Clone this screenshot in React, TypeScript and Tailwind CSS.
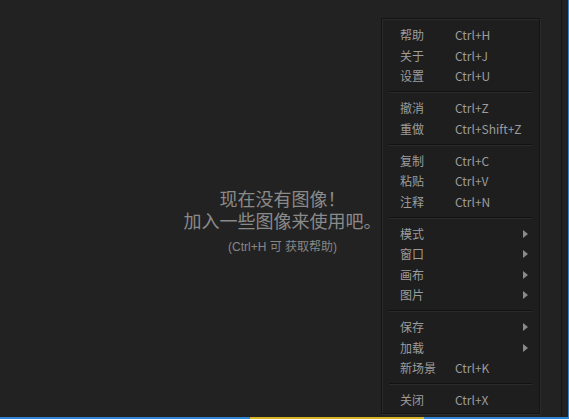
import React from 'react'

type Item = { label: string; shortcut?: string; sub?: boolean }

const groups: Item[][] = [
  [
    { label: '帮助', shortcut: 'Ctrl+H' },
    { label: '关于', shortcut: 'Ctrl+J' },
    { label: '设置', shortcut: 'Ctrl+U' },
  ],
  [
    { label: '撤消', shortcut: 'Ctrl+Z' },
    { label: '重做', shortcut: 'Ctrl+Shift+Z' },
  ],
  [
    { label: '复制', shortcut: 'Ctrl+C' },
    { label: '粘贴', shortcut: 'Ctrl+V' },
    { label: '注释', shortcut: 'Ctrl+N' },
  ],
  [
    { label: '模式', sub: true },
    { label: '窗口', sub: true },
    { label: '画布', sub: true },
    { label: '图片', sub: true },
  ],
  [
    { label: '保存', sub: true },
    { label: '加载', sub: true },
    { label: '新场景', shortcut: 'Ctrl+K' },
  ],
  [{ label: '关闭', shortcut: 'Ctrl+X' }],
]

function Arrow() {
  return (
    <svg width="5" height="8" viewBox="0 0 5 8" className="mr-[11px]">
      <path d="M0 0 L5 4 L0 8 Z" fill="#8a8a8a" />
    </svg>
  )
}

function ContextMenu() {
  return (
    <div className="absolute left-[381px] top-[18px] w-[159px] h-[396px] bg-[#1e1e1e] border border-[#141414] shadow-[1px_1px_0_#2c2c2c,inset_1px_1px_0_#2a2a2a] pt-[6px] text-[12px] text-[#9c9c9c]">
      {groups.map((group, gi) => (
        <div key={gi}>
          {gi > 0 && <div className="mx-[7px] my-[4.75px] h-[2px] border-t border-[#121212] border-b-[#2b2b2b] border-b" />}
          {group.map((item) => (
            <div key={item.label} className="flex items-center h-[20.5px] pl-[18px]">
              <span className="w-[55px] shrink-0">{item.label}</span>
              {item.shortcut && <span className="flex-1">{item.shortcut}</span>}
              {item.sub && (
                <span className="flex-1 flex justify-end">
                  <Arrow />
                </span>
              )}
            </div>
          ))}
        </div>
      ))}
    </div>
  )
}

export default function App() {
  return (
    <div
      className="relative w-[569px] h-[419px] bg-[#222222] flex flex-col overflow-hidden"
      style={{ fontFamily: '"Noto Sans CJK SC", "Noto Sans", sans-serif' }}
    >
      <div className="flex flex-1 min-h-0">
        <div
          className="flex-1 flex flex-col items-center justify-center pl-[4px] pt-[27px] text-[#8a8a8a]"
          style={{ fontFamily: '"Liberation Sans", "Noto Sans CJK SC", sans-serif' }}
        >
          <div className="text-[18px] leading-[22px]">现在没有图像！</div>
          <div className="text-[18px] leading-[22px]">加入一些图像来使用吧。</div>
          <div className="text-[12px] leading-[16px] mt-[6px] text-[#878787]">(Ctrl+H 可 获取帮助)</div>
        </div>
        <div className="w-[1px] bg-[#161616]" />
        <div className="w-[6px] bg-[#222222]" />
        <div className="w-[1px] bg-[#2f86d2]" />
      </div>
      <div className="flex h-[2px]">
        <div className="w-[250px] bg-[#2f86d2]" />
        <div className="w-[174px] bg-[#d7b52a]" />
        <div className="flex-1 bg-[#2f86d2]" />
      </div>
      <ContextMenu />
    </div>
  )
}
